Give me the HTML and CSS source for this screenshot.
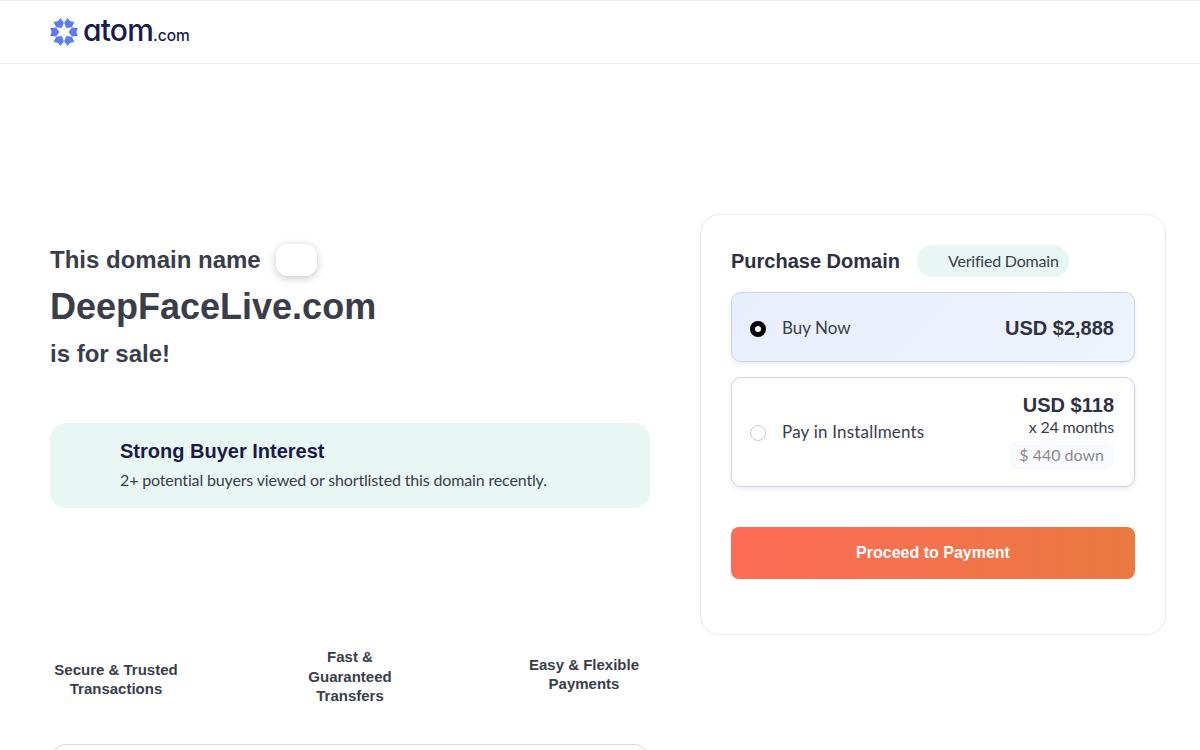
FILE: index.html
```html
<!DOCTYPE html>
<html lang="en">
  <head>
    <meta charset="UTF-8" />
    <meta name="viewport" content="width=device-width, initial-scale=1.0" />
    <title>DeepFaceLive.com is for sale</title>
    <link rel="stylesheet" href="styles.css">
  </head>
  <body>
    <header class="topbar">
      <a class="logo" href="#">
        <svg class="logo-mark" viewBox="0 0 28 28" width="28" height="28" aria-hidden="true">
          <g fill="#5b7cfa">
            <path d="M18.5 14 L22 9.6 L27.8 10 L26.4 14 L27.8 18 L22 18.4Z" />
            <path d="M18.5 14 L22 9.6 L27.8 10 L26.4 14 L27.8 18 L22 18.4Z" transform="rotate(60 14 14)" />
            <path d="M18.5 14 L22 9.6 L27.8 10 L26.4 14 L27.8 18 L22 18.4Z" transform="rotate(120 14 14)" />
            <path d="M18.5 14 L22 9.6 L27.8 10 L26.4 14 L27.8 18 L22 18.4Z" transform="rotate(180 14 14)" />
            <path d="M18.5 14 L22 9.6 L27.8 10 L26.4 14 L27.8 18 L22 18.4Z" transform="rotate(240 14 14)" />
            <path d="M18.5 14 L22 9.6 L27.8 10 L26.4 14 L27.8 18 L22 18.4Z" transform="rotate(300 14 14)" />
          </g>
        </svg>
        <span class="logo-name">atom<small>.com</small></span>
      </a>
    </header>

    <main class="page">
      <section class="pitch">
        <div class="intro">
          <h2 class="intro-line">This domain name <span class="chip"></span></h2>
          <h1 class="domain">DeepFaceLive.com</h1>
          <h2 class="intro-sale">is for sale!</h2>
        </div>

        <div class="interest">
          <h3>Strong Buyer Interest</h3>
          <p>2+ potential buyers viewed or shortlisted this domain recently.</p>
        </div>

        <ul class="perks">
          <li class="perk-secure">Secure &amp; Trusted Transactions</li>
          <li class="perk-fast">Fast &amp;<br>Guaranteed Transfers</li>
          <li class="perk-easy">Easy &amp; Flexible Payments</li>
        </ul>

        <div class="more-box"></div>
      </section>

      <aside class="purchase">
        <div class="purchase-head">
          <h2>Purchase Domain</h2>
          <span class="verified">Verified Domain</span>
        </div>

        <label class="option option-active">
          <span class="radio radio-on"></span>
          <span class="option-name">Buy Now</span>
          <span class="option-price">
            <strong>USD $2,888</strong>
          </span>
        </label>

        <label class="option option-plan">
          <span class="radio"></span>
          <span class="option-name">Pay in Installments</span>
          <span class="option-price">
            <strong>USD $118</strong>
            <span class="months">x 24 months</span>
            <span class="down">$ 440 down</span>
          </span>
        </label>

        <button class="pay-btn">Proceed to Payment</button>
      </aside>
    </main>
  </body>
</html>
```

FILE: styles.css
```css
* {
  margin: 0;
  padding: 0;
  box-sizing: border-box;
}

body {
  font-family: 'Lato', 'Noto Sans', sans-serif;
  background: #fff;
  color: #3a3d4a;
}

.topbar {
  height: 64px;
  border-top: 1px solid #ececec;
  border-bottom: 1px solid #ececec;
  padding-left: 50px;
  display: flex;
  align-items: center;
}

.logo {
  display: flex;
  align-items: center;
  gap: 5px;
  text-decoration: none;
  color: #1a1a4b;
}

.logo-mark {
  display: block;
}

.logo-name {
  padding-top: 2px;
  font-family: 'Inter', sans-serif;
  font-feature-settings: 'cv11';
  font-size: 30px;
  font-weight: 500;
  letter-spacing: -0.8px;
  line-height: 28px;
}

.logo-name small {
  font-size: 15.5px;
  letter-spacing: 0;
}

.page {
  display: flex;
  align-items: flex-start;
  gap: 50px;
  padding: 150px 34px 0 50px;
}

.pitch {
  width: 600px;
  flex-shrink: 0;
  padding-top: 30px;
}

.intro h1,
.intro h2 {
  font-family: 'Liberation Sans', Arial, sans-serif;
  font-weight: 700;
  color: #3a3d4a;
}

.intro-line {
  display: flex;
  align-items: center;
  gap: 15px;
  font-size: 24px;
  line-height: 32px;
}

.chip {
  width: 41px;
  height: 32px;
  border-radius: 12px;
  background: #fff;
  box-shadow: 0 2px 8px rgba(0, 0, 0, 0.22);
}

.domain {
  font-size: 36px;
  line-height: 42px;
  margin-top: 10px;
}

.intro-sale {
  font-size: 24px;
  line-height: 32px;
  margin-top: 10px;
}

.interest {
  margin-top: 53px;
  height: 85px;
  padding: 16px 20px 0 70px;
  background: #e8f7f3;
  border-radius: 16px;
}

.interest h3 {
  font-family: 'Liberation Sans', Arial, sans-serif;
  font-size: 20px;
  line-height: 25px;
  color: #1a1a4b;
}

.interest p {
  font-size: 16px;
  line-height: 20px;
  margin-top: 6px;
  letter-spacing: -0.15px;
  color: #3a3d4a;
}

.perks {
  list-style: none;
  display: flex;
  justify-content: space-between;
  align-items: flex-start;
  margin-top: 139px;
  font-family: 'Liberation Sans', Arial, sans-serif;
  font-size: 15px;
  font-weight: 700;
  line-height: 19px;
  text-align: center;
}

.perks li {
  width: 132px;
}

.perk-secure {
  padding-top: 13px;
}

.perks .perk-fast {
  padding: 0 16px;
  line-height: 19.5px;
}

.perk-easy {
  padding-top: 8px;
}

.more-box {
  height: 160px;
  margin-top: 38px;
  border: 1px solid #d5d9e5;
  border-radius: 16px;
}

.purchase {
  width: 466px;
  height: 421px;
  padding: 30px;
  border: 1px solid #e8e8ee;
  border-radius: 20px;
}

.purchase-head {
  display: flex;
  align-items: center;
  gap: 17px;
  height: 32px;
}

.purchase-head h2 {
  font-family: 'Liberation Sans', Arial, sans-serif;
  font-size: 20px;
  font-weight: 700;
  color: #2f3140;
}

.verified {
  height: 32px;
  padding: 0 10px 2px 31px;
  display: flex;
  align-items: center;
  background: #e8f7f3;
  border-radius: 16px;
  font-size: 16px;
  letter-spacing: -0.2px;
}

.option {
  display: flex;
  align-items: center;
  margin-top: 15px;
  padding: 0 20px 0 18px;
  border: 1px solid #d0d3e0;
  border-radius: 10px;
  box-shadow: 0 2px 5px rgba(30, 40, 90, 0.1);
  font-size: 17px;
}

.option-active {
  height: 70px;
  padding-top: 1px;
  background: linear-gradient(135deg, #e8effc, #eef4fd);
}

.option-plan {
  height: 110px;
  background: #fff;
}

.radio {
  width: 16px;
  height: 16px;
  margin-top: 2px;
  border: 1px solid #c9c9c9;
  border-radius: 50%;
  background: #fff;
  flex-shrink: 0;
}

.radio-on {
  border: 5px solid #000;
}

.option-name {
  margin-left: 16px;
  flex: 1;
  color: #3a3d4a;
}

.option-plan .option-name {
  margin-bottom: 2px;
  letter-spacing: 0.2px;
}

.option-price {
  display: flex;
  flex-direction: column;
  align-items: flex-end;
}

.option-price strong {
  font-family: 'Liberation Sans', Arial, sans-serif;
  font-size: 20px;
  line-height: 24px;
  color: #2f3140;
}

.option-plan .option-price {
  margin-top: -2px;
}

.months {
  font-size: 16px;
  line-height: 19px;
  letter-spacing: -0.2px;
}

.down {
  margin-top: 5px;
  padding: 0 10px;
  height: 28px;
  line-height: 28px;
  border-radius: 8px;
  background: #f9fafd;
  font-size: 16px;
  color: #8a8a8a;
}

.pay-btn {
  display: block;
  width: 100%;
  height: 52px;
  margin-top: 40px;
  border: none;
  border-radius: 8px;
  background: linear-gradient(90deg, #ff6b57, #e97a40);
  color: #fff;
  font-family: 'Liberation Sans', Arial, sans-serif;
  font-size: 16px;
  font-weight: 700;
  cursor: pointer;
}
```
